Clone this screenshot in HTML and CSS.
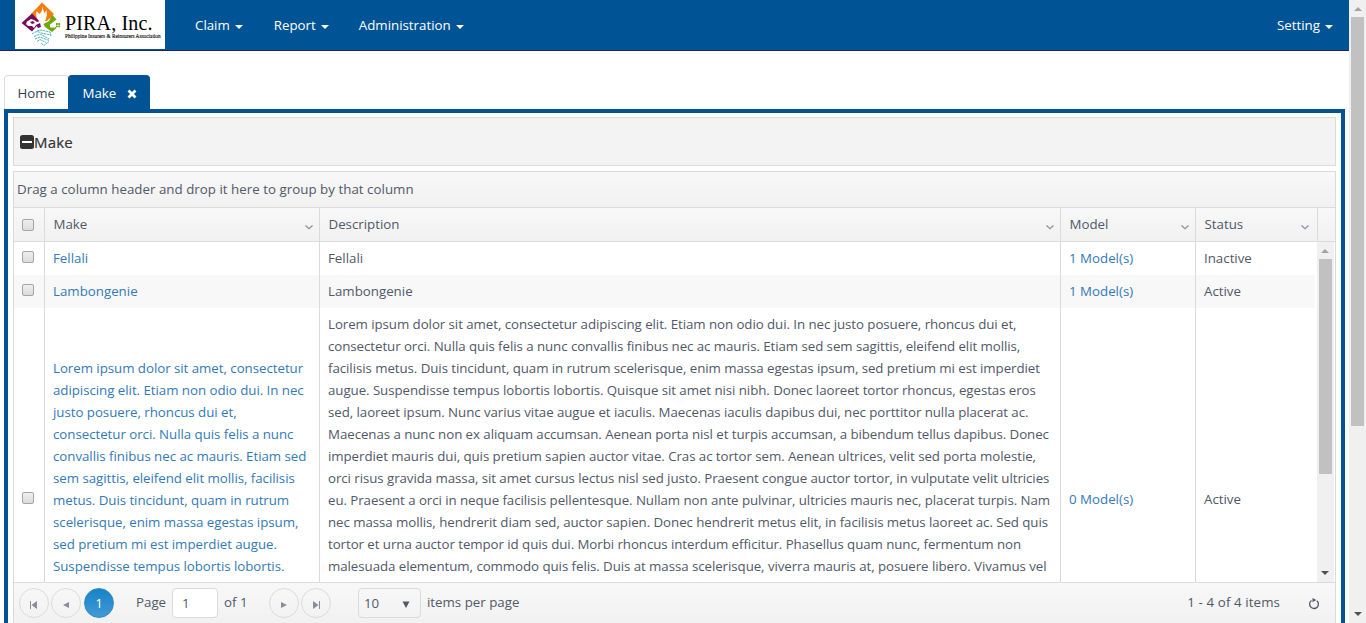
FILE: index.html
```html
<!DOCTYPE html>
<html lang="en">
<head>
<meta charset="utf-8">
<title>Make</title>
<link rel="stylesheet" href="styles.css">
</head>
<body>
<div class="page">
  <nav class="navbar">
    <a class="brand">
      <svg class="brand-mark" width="48" height="49" viewBox="0 0 48 49">
        <path d="M27 2.500L39 14l-7 7h-10l-6-7z" fill="#f57c0a"/>
        <path d="M27.500 6c.5 3 1 5 2 7l2-3c1 4 0 8-2 12h-5c-3-3-4-7-3-11l3 3c2-2 3-4 3-8z" fill="#fff"/>
        <path d="M17 13.500l8 8.500-8 9.500L6.500 23z" fill="#770a5d"/>
        <path d="M12 21.500l4-2.500 3 1 3 2 3-1v3l-4 1-2 3-2-2-4 0-2-2z" fill="#fff"/>
        <path d="M15 22l3-1 2 2-3 1zM21 25l4-2 1 4-3 1z" fill="#770a5d"/>
        <path d="M37 14.500l4.500 5-5 4 5 4.500-4.500 4-7-5-1.500-3 5.500-3z" fill="#71a711"/>
        <path d="M35 24.500l3-2 2 2v3h-5z" fill="#fff"/>
        <path d="M41 23h1.800v2H41zM43.300 23h1.800v2h-1.800zM41 25.500h1.800v1.800H41zM43.300 25.500h1.800v1.800h-1.800z" fill="#71a711"/>
        <g fill="none" stroke="#43aeb8" stroke-width=".9" stroke-dasharray="2.500 .6">
          <path d="M17 34q5-4 9-1l10 2M19 36.500l6-2.500 9 5M20 39l5-2 9 3.500M22 41.500l3-2 6 3M22 31l4-1 9 2 1 4M26 43l3 2.500 5-4"/>
        </g>
      </svg>
      <span class="brand-text"><span class="brand-name">PIRA, Inc.</span><span class="brand-sub">Philippine Insurers &amp; Reinsurers Association</span></span>
    </a>
    <ul class="menu">
      <li>Claim<i class="caret"></i></li>
      <li>Report<i class="caret"></i></li>
      <li>Administration<i class="caret"></i></li>
    </ul>
    <div class="menu-right">Setting<i class="caret"></i></div>
  </nav>

  <div class="tabs">
    <div class="tab">Home</div>
    <div class="tab active">Make
      <svg class="close" width="10" height="10" viewBox="0 0 10 10"><path d="M1.500 1.500l7 7M8.500 1.500l-7 7" stroke="#fff" stroke-width="2.700"/></svg>
    </div>
  </div>

  <main class="content">
    <div class="panel-title">
      <svg width="14" height="14" viewBox="0 0 14 14"><rect width="14" height="14" rx="2.500" fill="#333"/><path d="M2 6h10v2H2z" fill="#fff"/></svg>
      <span>Make</span>
    </div>
    <section class="grid">
      <div class="group-bar">Drag a column header and drop it here to group by that column</div>
      <div class="row head">
        <div class="cell check"><i class="box"></i></div>
        <div class="cell">Make<svg class="chev" width="8" height="5" viewBox="0 0 8 5"><path d="M.5.5L4 3.700 7.500.5"/></svg></div>
        <div class="cell">Description<svg class="chev" width="8" height="5" viewBox="0 0 8 5"><path d="M.5.5L4 3.700 7.500.5"/></svg></div>
        <div class="cell">Model<svg class="chev" width="8" height="5" viewBox="0 0 8 5"><path d="M.5.5L4 3.700 7.500.5"/></svg></div>
        <div class="cell">Status<svg class="chev" width="8" height="5" viewBox="0 0 8 5"><path d="M.5.5L4 3.700 7.500.5"/></svg></div>
      </div>
      <div class="grid-body">
        <div class="rows">
          <div class="row">
            <div class="cell check"><i class="box"></i></div>
            <div class="cell link">Fellali</div>
            <div class="cell">Fellali</div>
            <div class="cell link">1 Model(s)</div>
            <div class="cell">Inactive</div>
          </div>
          <div class="row alt">
            <div class="cell check"><i class="box"></i></div>
            <div class="cell link">Lambongenie</div>
            <div class="cell">Lambongenie</div>
            <div class="cell link">1 Model(s)</div>
            <div class="cell">Active</div>
          </div>
          <div class="row tall">
            <div class="cell check"><i class="box"></i></div>
            <div class="cell link text short">Lorem ipsum dolor sit amet, consectetur<br>adipiscing elit. Etiam non odio dui. In nec<br>justo posuere, rhoncus dui et,<br>consectetur orci. Nulla quis felis a nunc<br>convallis finibus nec ac mauris. Etiam sed<br>sem sagittis, eleifend elit mollis, facilisis<br>metus. Duis tincidunt, quam in rutrum<br>scelerisque, enim massa egestas ipsum,<br>sed pretium mi est imperdiet augue.<br>Suspendisse tempus lobortis lobortis.</div>
            <div class="cell text">Lorem ipsum dolor sit amet, consectetur adipiscing elit. Etiam non odio dui. In nec justo posuere, rhoncus dui et,<br>consectetur orci. Nulla quis felis a nunc convallis finibus nec ac mauris. Etiam sed sem sagittis, eleifend elit mollis,<br>facilisis metus. Duis tincidunt, quam in rutrum scelerisque, enim massa egestas ipsum, sed pretium mi est imperdiet<br>augue. Suspendisse tempus lobortis lobortis. Quisque sit amet nisi nibh. Donec laoreet tortor rhoncus, egestas eros<br>sed, laoreet ipsum. Nunc varius vitae augue et iaculis. Maecenas iaculis dapibus dui, nec porttitor nulla placerat ac.<br>Maecenas a nunc non ex aliquam accumsan. Aenean porta nisl et turpis accumsan, a bibendum tellus dapibus. Donec<br>imperdiet mauris dui, quis pretium sapien auctor vitae. Cras ac tortor sem. Aenean ultrices, velit sed porta molestie,<br>orci risus gravida massa, sit amet cursus lectus nisl sed justo. Praesent congue auctor tortor, in vulputate velit ultricies<br>eu. Praesent a orci in neque facilisis pellentesque. Nullam non ante pulvinar, ultricies mauris nec, placerat turpis. Nam<br>nec massa mollis, hendrerit diam sed, auctor sapien. Donec hendrerit metus elit, in facilisis metus laoreet ac. Sed quis<br>tortor et urna auctor tempor id quis dui. Morbi rhoncus interdum efficitur. Phasellus quam nunc, fermentum non<br>malesuada elementum, commodo quis felis. Duis at massa scelerisque, viverra mauris at, posuere libero. Vivamus vel</div>
            <div class="cell link mid">0 Model(s)</div>
            <div class="cell mid">Active</div>
          </div>
        </div>
        <div class="scroll inner"><i class="up"></i><i class="thumb"></i><i class="down"></i></div>
      </div>
      <footer class="pager">
        <span class="pg"><svg width="10" height="8" viewBox="0 0 10 8"><path d="M1 0h1v8H1zM8 0v8L2.500 4z"/></svg></span>
        <span class="pg"><svg width="10" height="8" viewBox="0 0 10 8"><path d="M8 1v6L2 4z"/></svg></span>
        <span class="pg current">1</span>
        <span class="page-word">Page</span>
        <span class="page-input">1</span>
        <span class="page-of">of 1</span>
        <span class="pg"><svg width="10" height="8" viewBox="0 0 10 8"><path d="M2 1v6L8 4z"/></svg></span>
        <span class="pg"><svg width="10" height="8" viewBox="0 0 10 8"><path d="M8 0h1v8H8zM2 0v8L7.500 4z"/></svg></span>
        <span class="size">10<svg width="8" height="7" viewBox="0 0 8 7"><path d="M.5.5h7L4 7z" fill="#515967"/></svg></span>
        <span class="per">items per page</span>
        <span class="info">1 - 4 of 4 items</span>
        <svg class="refresh" width="12" height="12" viewBox="0 0 12 12"><path d="M3.500 2.500A4.400 4.400 0 1 0 8.800 2.700" fill="none" stroke="#515967" stroke-width="1.300"/><path d="M4.500 0l3.800 2-3.800 2.200z" fill="#515967"/></svg>
      </footer>
    </section>
  </main>
</div>
<div class="scroll outer"><i class="up"></i><i class="thumb"></i><i class="down"></i></div>
</body>
</html>
```
FILE: styles.css
```css
* { box-sizing: border-box; }
body {
  margin: 0;
  width: 1366px;
  height: 623px;
  overflow: hidden;
  display: flex;
  background: #fff;
  color: #515967;
  font: 13.3px/22px "Open Sans", "Noto Sans", sans-serif;
}
.page { width: 1349px; height: 623px; display: flex; flex-direction: column; overflow: hidden; }

.navbar { flex: none; height: 51px; background: #005395; border-bottom: 1px solid #1f2069; display: flex; color: #fff; padding-left: 15px; line-height: 50px; }
.brand { width: 150px; height: 49px; background: #fff; display: flex; color: #000; font-family: "Liberation Serif", serif; }
.brand-mark { flex: none; width: 48px; }
.brand-text { display: flex; flex-direction: column; padding-top: 13px; white-space: nowrap; }
.brand-name { font-size: 20px; line-height: 20px; letter-spacing: .15px; padding-left: 2px; }
.brand-sub { font-size: 5.300px; line-height: 6px; padding-left: 2px; -webkit-text-stroke: .1px #000; }
.menu { list-style: none; margin: 0; padding: 0 0 0 30px; display: flex; gap: 31px; }
.menu li:last-child { margin-left: -1px; }
.menu-right { margin-left: auto; padding-right: 16px; }
.caret { display: inline-block; border: 4px solid transparent; border-top-color: #fff; border-bottom: 0; margin-left: 5px; vertical-align: 1px; }

.tabs { flex: none; display: flex; height: 58px; padding: 24px 0 0 4px; color: #333f50; line-height: 35px; }
.tab { width: 65px; padding-left: 12.500px; border: 1px solid #ddd; border-bottom: 0; border-radius: 4px 4px 0 0; }
.tab.active { width: 82px; margin-left: -1px; padding-left: 13.500px; background: #005395; border-color: #005395; color: #fff; }
.close { margin-left: 7px; vertical-align: -1px; }

.content { flex: none; margin-left: 4px; width: 1341px; height: 530px; border: 4px solid #005395; padding: 4px 5px; }
.panel-title { width: 1323px; height: 49px; border: 1px solid #dbdbdb; background: #f3f3f4; color: #333; font-size: 15px; letter-spacing: .2px; display: flex; align-items: center; padding-left: 6px; -webkit-text-stroke: .2px #333; }
.grid { width: 1323px; margin-top: 5px; border: 1px solid #dbdbdb; }
.group-bar { height: 36px; line-height: 34px; padding-left: 3px; letter-spacing: .03px; background: linear-gradient(#f8f8f8, #f1f1f1); border-bottom: 1px solid #dbdbdb; }
.row { display: grid; grid-template-columns: 31px 275px 741px 135px 119px; height: 33px; white-space: nowrap; }
.head { grid-template-columns: 31px 275px 741px 135px 122px; height: 34px; border-bottom: 1px solid #dbdbdb; background: linear-gradient(#f8f8f8, #f1f1f1); }
.cell { position: relative; padding-left: 8px; line-height: 33px; border-right: 1px solid #dbdbdb; overflow: hidden; }
.head .cell:not(.check) { padding-left: 8.500px; }
.row:not(.head) .cell:last-child { border-right: 0; }
.alt { background: #f8f8f8; }
.check { display: flex; align-items: center; padding-left: 8px; }
.box { width: 12px; height: 12px; border: 1px solid #a5a5a5; border-radius: 2px; background: linear-gradient(#eee, #dcdcdc); }
.row:not(.head) .check { padding-bottom: 3px; }
.chev { position: absolute; right: 6px; bottom: 11px; fill: none; stroke: #8d939e; stroke-width: 1.3; }
.head .cell:last-child .chev { right: 8px; }
.link { color: #337ab7; }
.grid-body { height: 341px; display: flex; overflow: hidden; border-bottom: 1px solid #dbdbdb; }
.rows { width: 1303px; padding-right: 2px; flex: none; }
.tall { height: 382px; }
.text { line-height: 22px; padding-top: 5px; letter-spacing: -.063px; }
.short { padding-top: 49px; letter-spacing: -.04px; }
.mid { line-height: 383px; }

.scroll { position: relative; background: #f0f0f0; width: 17px; }
.outer { height: 623px; }
.inner { height: 340px; }
.scroll i { position: absolute; left: 5px; }
.inner i { margin-left: -1px; }
.scroll.inner .thumb { left: 2px; margin-left: 0; }
.up { top: 7px; border: 4px solid transparent; border-bottom-color: #a3a3a3; border-top: 0; }
.down { bottom: 7px; border: 4px solid transparent; border-top-color: #505050; border-bottom: 0; }
.scroll .thumb { left: 2px; top: 17px; width: 13px; background: #c1c1c1; }
.outer .thumb { height: 409px; }
.inner .thumb { height: 215px; }

.pager { height: 42px; background: linear-gradient(#f8f8f8, #f1f1f1); display: flex; align-items: flex-start; padding: 5px 15px 0 5px; line-height: 29px; }
.pg { flex: none; width: 30px; height: 30px; margin-right: 2px; border: 1px solid #dbdbdb; border-radius: 50%; display: flex; align-items: center; justify-content: center; fill: #888e99; }
.pg svg { margin-top: 3px; }
.current { background: linear-gradient(#1683c8, #4399d4); border-color: #2a8bca; color: #fff; margin-left: 1px; }
.page-word { width: 36px; margin-left: 20px; }
.page-input { width: 46px; height: 30px; background: #fff; border: 1px solid #dbdbdb; border-radius: 4px; padding-left: 9px; }
.page-of { width: 51px; padding-left: 6px; }
.size { width: 63px; height: 30px; margin-left: 25px; border: 1px solid #dbdbdb; border-radius: 4px; display: flex; justify-content: space-between; align-items: center; padding: 0 10px 0 5px; }
.size svg { margin-top: 3px; }
.per { margin-left: 6px; }
.info { margin-left: auto; letter-spacing: .1px; }
.refresh { margin: 10px 0 0 28px; }
```
